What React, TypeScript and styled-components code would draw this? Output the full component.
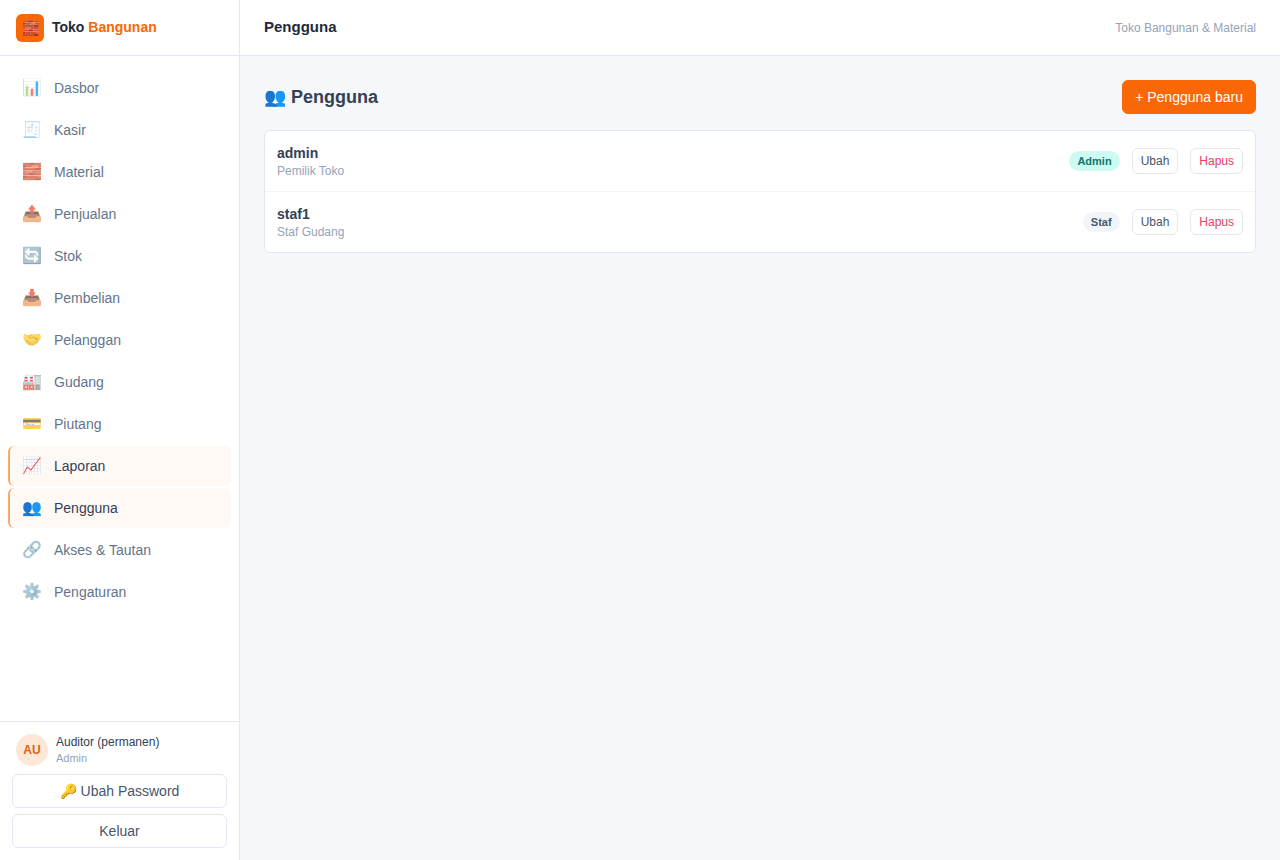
import React from "react";
import styled, { createGlobalStyle } from "styled-components";

const Global = createGlobalStyle`
  *, *::before, *::after { box-sizing: border-box; }
  body {
    margin: 0;
    background: #f5f7fb;
    color: #334155;
    font-family: "Liberation Sans", Arial, sans-serif;
    font-size: 14px;
    line-height: 20px;
  }
  button { font-family: inherit; cursor: pointer; }
  h1, h2, p, ul { margin: 0; padding: 0; }
  ul { list-style: none; }
`;

const Shell = styled.div`
  display: flex;
  min-height: 100vh;
`;

const Sidebar = styled.aside`
  display: flex;
  flex-direction: column;
  flex: 0 0 240px;
  height: 100vh;
  position: sticky;
  top: 0;
  background: #fff;
  border-right: 1px solid #e2e8f0;
`;

const Brand = styled.div`
  display: flex;
  align-items: center;
  gap: 8px;
  height: 56px;
  padding: 0 16px;
  border-bottom: 1px solid #e2e8f0;
  color: #1e293b;
  font-weight: 700;
`;

const BrandMark = styled.span`
  display: flex;
  align-items: center;
  justify-content: center;
  width: 28px;
  height: 28px;
  border-radius: 6px;
  background: #f96706;
  color: #fff;
  font-size: 14px;
`;

const BrandName = styled.span`
  padding-bottom: 2px;
`;

const Accent = styled.span`
  color: #f96706;
`;

const Nav = styled.nav`
  flex: 1;
  overflow-y: auto;
  padding: 12px 8px;
`;

const NavList = styled.ul`
  display: flex;
  flex-direction: column;
  gap: 2px;
`;

const NavLink = styled.a<{ $active?: boolean }>`
  display: flex;
  align-items: center;
  gap: 12px;
  height: 40px;
  padding: 0 12px;
  border-left: 2px solid ${(p) => (p.$active ? "#fba66a" : "transparent")};
  border-radius: 6px;
  background: ${(p) => (p.$active ? "#fff9f5" : "transparent")};
  color: ${(p) => (p.$active ? "#334155" : "#64748b")};
  text-decoration: none;
`;

const NavIcon = styled.span<{ $active?: boolean }>`
  width: 20px;
  font-size: 16px;
  text-align: center;
  opacity: ${(p) => (p.$active ? 1 : 0.7)};
`;

const Account = styled.div`
  display: flex;
  flex-direction: column;
  gap: 6px;
  padding: 12px;
  border-top: 1px solid #e2e8f0;
`;

const Profile = styled.div`
  display: flex;
  align-items: center;
  gap: 8px;
  padding: 0 4px;
  margin-bottom: 2px;
`;

const Avatar = styled.span`
  display: flex;
  align-items: center;
  justify-content: center;
  width: 32px;
  height: 32px;
  border-radius: 50%;
  background: #fee7d6;
  color: #e0611a;
  font-size: 12px;
  font-weight: 700;
`;

const ProfileName = styled.p`
  color: #334155;
  font-size: 12px;
  line-height: 16px;
`;

const ProfileRole = styled.p`
  color: #94a3b8;
  font-size: 11px;
  line-height: 16px;
`;

const Button = styled.button<{ $small?: boolean; $tone?: "primary" | "danger" }>`
  height: ${(p) => (p.$small ? 26 : 34)}px;
  padding: 0 ${(p) => (p.$small ? 8 : 12)}px;
  border: 1px solid ${(p) => (p.$tone === "primary" ? "#f96706" : "#e2e8f0")};
  border-radius: 6px;
  background: ${(p) => (p.$tone === "primary" ? "#f96706" : "#fff")};
  color: ${(p) => (p.$tone === "primary" ? "#fff" : p.$tone === "danger" ? "#e8405f" : "#475569")};
  font-size: ${(p) => (p.$small ? 12 : 14)}px;
`;

const Main = styled.div`
  flex: 1;
  min-width: 0;
`;

const TopBar = styled.header`
  display: flex;
  align-items: center;
  justify-content: space-between;
  height: 56px;
  padding: 0 24px;
  background: #fff;
  border-bottom: 1px solid #e2e8f0;
`;

const TopTitle = styled.h1`
  padding-bottom: 2px;
  color: #1e293b;
  font-size: 15px;
  font-weight: 700;
`;

const TopNote = styled.span`
  color: #94a3b8;
  font-size: 12px;
`;

const Content = styled.main`
  display: flex;
  flex-direction: column;
  gap: 16px;
  padding: 24px;
`;

const PageHead = styled.div`
  display: flex;
  align-items: center;
  justify-content: space-between;
`;

const PageTitle = styled.h2`
  color: #334155;
  font-size: 18px;
  font-weight: 700;
  line-height: 28px;
`;

const UserList = styled.ul`
  background: #fff;
  border: 1px solid #e2e8f0;
  border-radius: 6px;
`;

const UserRow = styled.li`
  display: flex;
  align-items: center;
  gap: 12px;
  padding: 12px;
  & + & { border-top: 1px solid #f1f5f9; }
`;

const UserInfo = styled.div`
  flex: 1;
`;

const UserName = styled.p`
  color: #334155;
  font-weight: 700;
`;

const UserNote = styled.p`
  color: #94a3b8;
  font-size: 12px;
  line-height: 16px;
`;

const Badge = styled.span<{ $admin?: boolean }>`
  padding: 2px 8px;
  border-radius: 10px;
  background: ${(p) => (p.$admin ? "#ccfbf1" : "#f1f5f9")};
  color: ${(p) => (p.$admin ? "#0f766e" : "#475569")};
  font-size: 11px;
  font-weight: 700;
  line-height: 16px;
`;

const links = [
  { icon: "📊", label: "Dasbor" },
  { icon: "🧾", label: "Kasir" },
  { icon: "🧱", label: "Material" },
  { icon: "📤", label: "Penjualan" },
  { icon: "🔄", label: "Stok" },
  { icon: "📥", label: "Pembelian" },
  { icon: "🤝", label: "Pelanggan" },
  { icon: "🏭", label: "Gudang" },
  { icon: "💳", label: "Piutang" },
  { icon: "📈", label: "Laporan", active: true },
  { icon: "👥", label: "Pengguna", active: true },
  { icon: "🔗", label: "Akses & Tautan" },
  { icon: "⚙️", label: "Pengaturan" },
];

const users = [
  { name: "admin", note: "Pemilik Toko", role: "Admin" },
  { name: "staf1", note: "Staf Gudang", role: "Staf" },
];

export default function App() {
  return (
    <>
      <Global />
      <Shell>
        <Sidebar>
          <Brand>
            <BrandMark>🧱</BrandMark>
            <BrandName>Toko <Accent>Bangunan</Accent></BrandName>
          </Brand>
          <Nav>
            <NavList>
              {links.map((l) => (
                <li key={l.label}>
                  <NavLink href="#" $active={l.active}>
                    <NavIcon $active={l.active}>{l.icon}</NavIcon>
                    {l.label}
                  </NavLink>
                </li>
              ))}
            </NavList>
          </Nav>
          <Account>
            <Profile>
              <Avatar>AU</Avatar>
              <div>
                <ProfileName>Auditor (permanen)</ProfileName>
                <ProfileRole>Admin</ProfileRole>
              </div>
            </Profile>
            <Button type="button">🔑 Ubah Password</Button>
            <Button type="button">Keluar</Button>
          </Account>
        </Sidebar>
        <Main>
          <TopBar>
            <TopTitle>Pengguna</TopTitle>
            <TopNote>Toko Bangunan &amp; Material</TopNote>
          </TopBar>
          <Content>
            <PageHead>
              <PageTitle>👥 Pengguna</PageTitle>
              <Button type="button" $tone="primary">+ Pengguna baru</Button>
            </PageHead>
            <UserList>
              {users.map((u) => (
                <UserRow key={u.name}>
                  <UserInfo>
                    <UserName>{u.name}</UserName>
                    <UserNote>{u.note}</UserNote>
                  </UserInfo>
                  <Badge $admin={u.role === "Admin"}>{u.role}</Badge>
                  <Button type="button" $small>Ubah</Button>
                  <Button type="button" $small $tone="danger">Hapus</Button>
                </UserRow>
              ))}
            </UserList>
          </Content>
        </Main>
      </Shell>
    </>
  );
}
